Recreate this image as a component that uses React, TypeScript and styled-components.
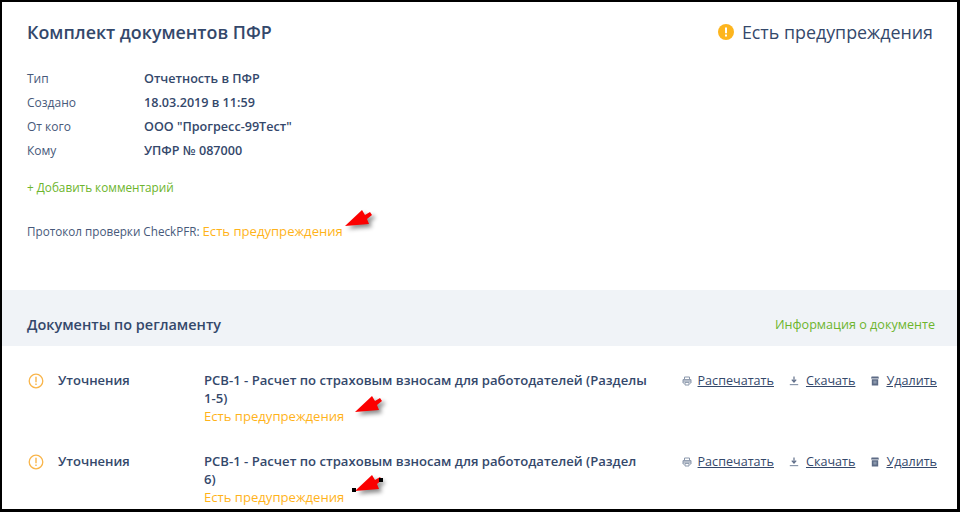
import { FC } from 'react';
import styled, { createGlobalStyle } from 'styled-components';

const GlobalStyle = createGlobalStyle`
  html, body { margin: 0; padding: 0; background: #000; }
  body { font-family: "Open Sans", "Noto Sans", sans-serif; color: #34486b; }
`;

// ========== icons ==========

const PrintIcon: FC = () => (
  <ActionSvg viewBox="0 0 10 10">
    <path d="M2.5 3.4V1h5v2.4M2.5 7H1V3.6h8V7H7.5M3 6.4h4V9H3z" fill="none" stroke="#8a97ab" strokeWidth="1" />
    <rect x="1" y="4.4" width="8" height="1.2" fill="#8a97ab" />
  </ActionSvg>
);

const DownloadIcon: FC = () => (
  <ActionSvg viewBox="0 0 10 10">
    <path d="M5 .5v5.2M2.8 3.6 5 6l2.2-2.4" fill="none" stroke="#5f6e89" strokeWidth="1.2" />
    <path d="M.8 8.6h8.4" stroke="#8a97ab" strokeWidth="1.2" />
  </ActionSvg>
);

const TrashIcon: FC = () => (
  <ActionSvg viewBox="0 0 10 10">
    <path d="M1.6.6h6.8L9 2.6H1zM1.8 3.2h6.4v6.2H1.8z" fill="#5d6b85" />
    <path d="M3.4 4.6h3.2v3H3.4z" fill="#8a97ab" />
  </ActionSvg>
);

const WarnOutline: FC = () => (
  <svg width="16" height="16" viewBox="0 0 16 16">
    <circle cx="8" cy="8" r="6.8" fill="none" stroke="#f9b54a" strokeWidth="1.3" />
    <path d="M8 3.8v5.4" stroke="#f9b54a" strokeWidth="1.4" />
    <path d="M8 10.6v1.5" stroke="#f9b54a" strokeWidth="1.4" />
  </svg>
);

const WarnSolid: FC = () => (
  <svg width="16" height="16" viewBox="0 0 16 16">
    <circle cx="8" cy="8" r="8" fill="#fdb51e" />
    <path d="M8 3.4v5.8" stroke="#fff" strokeWidth="2" />
    <path d="M8 10.6v2" stroke="#fff" strokeWidth="2" />
  </svg>
);

type ArrowProps = { $x: number; $y: number };

const RedArrow: FC<ArrowProps & { handles?: boolean }> = ({ $x, $y, handles }) => (
  <ArrowMark $x={$x} $y={$y}>
    <svg width="36" height="24" viewBox="0 0 36 24" overflow="visible">
      <ArrowShape points="1,17 18,1 21,6 26,3 28,6 23,10 25,15" />
      {handles && (
        <>
          <rect x="-2" y="14" width="4" height="4" fill="#000" />
          <rect x="25" y="4" width="4" height="4" fill="#000" />
        </>
      )}
    </svg>
  </ArrowMark>
);

// ========== data ==========

const META = [
  ['Тип', 'Отчетность в ПФР'],
  ['Создано', '18.03.2019 в 11:59'],
  ['От кого', 'ООО "Прогресс-99Тест"'],
  ['Кому', 'УПФР № 087000'],
];

const DOCS = [
  { title: 'РСВ-1 - Расчет по страховым взносам для работодателей (Разделы 1-5)', arrow: { x: 354, y: 395 }, handles: false },
  { title: 'РСВ-1 - Расчет по страховым взносам для работодателей (Раздел 6)', arrow: { x: 354, y: 474 }, handles: true },
];

// ========== component ==========

export default function App() {
  return (
    <>
      <GlobalStyle />
      <Frame>
        <Sheet>
          <Summary>
            <TitleRow>
              <Title>Комплект документов ПФР</Title>
              <Status>
                <WarnSolid />
                Есть предупреждения
              </Status>
            </TitleRow>
            <MetaList>
              {META.map(([label, value]) => (
                <MetaRow key={label}>
                  <MetaLabel>{label}</MetaLabel>
                  <MetaValue>{value}</MetaValue>
                </MetaRow>
              ))}
            </MetaList>
            <AddComment>+ Добавить комментарий</AddComment>
            <Protocol>
              Протокол проверки CheckPFR: <WarnText>Есть предупреждения</WarnText>
            </Protocol>
          </Summary>
          <SectionBar>
            <SectionTitle>Документы по регламенту</SectionTitle>
            <InfoLink>Информация о документе</InfoLink>
          </SectionBar>
          <DocList>
            {DOCS.map((doc) => (
              <DocRow key={doc.title}>
                <DocIcon>
                  <WarnOutline />
                </DocIcon>
                <DocType>Уточнения</DocType>
                <DocBody>
                  <DocTitle>{doc.title}</DocTitle>
                  <WarnText>Есть предупреждения</WarnText>
                </DocBody>
                <Actions>
                  <Action><PrintIcon /><ActionLink>Распечатать</ActionLink></Action>
                  <Action $gap={7}><DownloadIcon /><ActionLink>Скачать</ActionLink></Action>
                  <Action><TrashIcon /><ActionLink>Удалить</ActionLink></Action>
                </Actions>
              </DocRow>
            ))}
          </DocList>
        </Sheet>
        <RedArrow $x={344} $y={209} />
        {DOCS.map((doc) => (
          <RedArrow key={doc.arrow.y} $x={doc.arrow.x} $y={doc.arrow.y} handles={doc.handles} />
        ))}
      </Frame>
    </>
  );
}

// ========== styles ==========

const Frame = styled.div`
  position: relative;
  width: 960px;
  height: 512px;
  box-sizing: border-box;
  padding: 2px 3px 3px 2px;
  background: #000;
  overflow: hidden;
`;

const Sheet = styled.div`
  height: 100%;
  background: #fff;
  overflow: hidden;
`;

const Summary = styled.section`
  height: 288px;
  box-sizing: border-box;
  padding: 18px 24px 0 25px;
`;

const TitleRow = styled.div`
  display: flex;
  justify-content: space-between;
  align-items: center;
  height: 24px;
`;

const Title = styled.h1`
  margin: 0;
  font-size: 17.85px;
  font-weight: 600;
  color: #34486b;
`;

const Status = styled.div`
  display: flex;
  align-items: center;
  gap: 8px;
  font-size: 17.85px;
  color: #34486b;
`;

const MetaList = styled.div`
  margin-top: 22px;
  display: flex;
  flex-direction: column;
`;

const MetaRow = styled.div`
  display: flex;
  height: 24px;
  align-items: center;
  font-size: 12px;
`;

const MetaLabel = styled.span`
  width: 117px;
  color: #47597a;
`;

const MetaValue = styled.span`
  font-size: 12.6px;
  font-weight: 600;
  color: #34486b;
`;

const AddComment = styled.div`
  margin-top: 16px;
  font-size: 11.75px;
  line-height: 18px;
  color: #6db52d;
`;

const Protocol = styled.div`
  margin-top: 26px;
  font-size: 11.7px;
  line-height: 18px;
  color: #47597a;
`;

const WarnText = styled.span`
  font-size: 13.1px;
  line-height: 18px;
  color: #ffb31a;
`;

const SectionBar = styled.div`
  display: flex;
  justify-content: space-between;
  align-items: center;
  height: 56px;
  box-sizing: border-box;
  padding: 12px 22px 0 25px;
  background: #f0f3f7;
`;

const SectionTitle = styled.h2`
  margin: 0;
  font-size: 14.45px;
  font-weight: 600;
  color: #34486b;
`;

const InfoLink = styled.span`
  font-size: 12.6px;
  color: #6db52d;
`;

const DocList = styled.div`
  display: flex;
  flex-direction: column;
  padding-top: 25px;
  gap: 27px;
`;

const DocRow = styled.div`
  display: grid;
  grid-template-columns: 30px 146px 444px 1fr;
  padding: 0 20px 0 26px;
  align-items: start;
`;

const DocIcon = styled.div`
  height: 16px;
  margin-top: 1px;
`;

const DocType = styled.div`
  font-size: 13px;
  line-height: 18px;
  font-weight: 600;
  color: #34486b;
`;

const DocBody = styled.div`
  display: flex;
  flex-direction: column;
`;

const DocTitle = styled.div`
  font-size: 13.1px;
  line-height: 18px;
  font-weight: 600;
  color: #34486b;
`;

const Actions = styled.div`
  display: flex;
  justify-content: flex-end;
  gap: 15px;
  line-height: 18px;
  margin-top: 1px;
`;

const Action = styled.span<{ $gap?: number }>`
  display: flex;
  align-items: center;
  gap: ${(p) => p.$gap ?? 6}px;
  font-size: 12.6px;
`;

const ActionSvg = styled.svg`
  width: 10px;
  height: 10px;
`;

const ActionLink = styled.span`
  color: #34486b;
  text-decoration: underline;
`;

const ArrowMark = styled.div<ArrowProps>`
  position: absolute;
  left: ${(p) => p.$x}px;
  top: ${(p) => p.$y}px;
  width: 36px;
  height: 24px;
  line-height: 0;
`;

const ArrowShape = styled.polygon`
  fill: #fb0000;
  filter: drop-shadow(3px 3px 2px rgba(0, 0, 0, 0.45));
`;
